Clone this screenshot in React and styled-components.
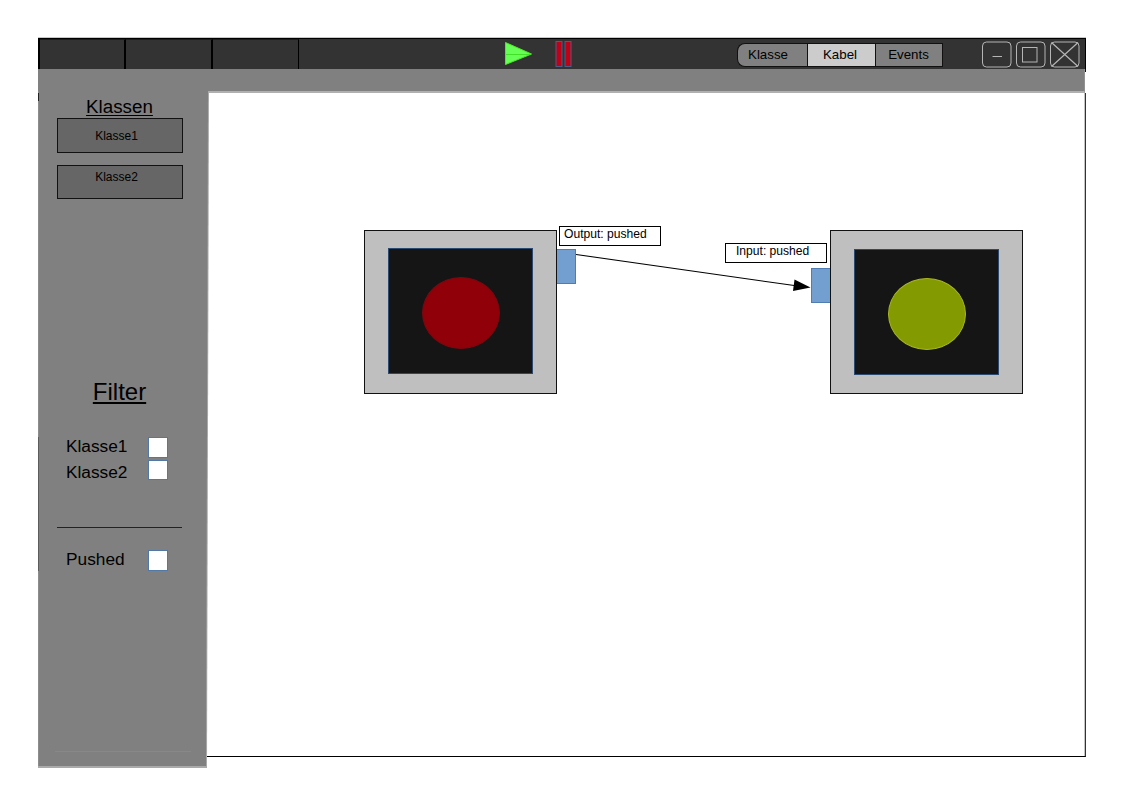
import React from "react";
import styled, { createGlobalStyle } from "styled-components";

const GlobalStyle = createGlobalStyle`
  * { box-sizing: border-box; }
  body {
    margin: 0;
    background: #fff;
    color: #000;
    font-family: "Liberation Sans", Arial, sans-serif;
  }
`;

const Page = styled.div`
  width: 1123px;
  height: 794px;
  padding: 38px 36px 0 38px;
  overflow: hidden;
`;

const Window = styled.main`
  width: 1048px;
`;

const TitleBar = styled.header`
  position: relative;
  z-index: 1;
  display: flex;
  align-items: flex-start;
  height: 31px;
  background: #333;
  border-top: 1px solid #000;
  border-right: 1px solid #000;
  box-shadow: 0 -1px 0 #c8c8c8;
`;

const Tabs = styled.nav`
  display: flex;
  width: 261px;
  height: 30px;
  border-left: 2px solid #000;
`;

const Tab = styled.div`
  width: ${(p) => p.$width}px;
  border-top: 1px solid #1c1c1c;
  border-right: ${(p) => p.$edge}px solid #000;
`;

const Playback = styled.div`
  display: flex;
  align-items: flex-start;
  gap: 22px;
  margin: 1px 0 0 205px;
`;

const ModeSwitch = styled.div`
  display: flex;
  margin: 4px 0 0 164px;
  height: 24px;
`;

const Mode = styled.button`
  width: ${(p) => p.$width}px;
  height: 24px;
  padding: 0 ${(p) => p.$shift || 0}px 1px 0;
  border: 1px solid #111;
  border-right-width: ${(p) => (p.$last ? 1 : 0)}px;
  border-radius: ${(p) => (p.$first ? "8px 0 0 8px" : "0")};
  background: ${(p) => (p.$active ? "#ccc" : "#808080")};
  color: #000;
  font: 13.3px "Liberation Sans", Arial, sans-serif;
  text-align: center;
`;

const WindowButtons = styled.div`
  display: flex;
  gap: 4px;
  margin: 2px 0 0 39px;
`;

const ToolStrip = styled.div`
  width: 1047px;
  height: 24px;
  background: #808080;
  border-bottom: 2px solid #b0b0b0;
  border-right: 1px solid #929292;
  box-shadow: 1px -21px 0 #111;
`;

const Body = styled.div`
  display: flex;
  align-items: flex-start;
`;

const SidebarEdge = styled.aside`
  position: relative;
  z-index: 1;
  flex: none;
  width: 171px;
  height: 677px;
  margin-top: -2px;
  background: #aaa;
  clip-path: polygon(0 0, 171px 0, 169px 100%, 0 100%);
`;

const SidebarPanel = styled.div`
  display: flex;
  flex-direction: column;
  height: 675px;
  padding: 5px 0 0 20px;
  background:
    linear-gradient(
      #8c8c8c 0 2px,
      #222 2px 10px,
      #8c8c8c 10px 346px,
      #5c5c5c 346px 480px,
      #8c8c8c 480px
    ) 0 0 / 1px 100% no-repeat,
    #808080;
  clip-path: polygon(0 0, 170px 0, 168px 100%, 0 100%);
`;

const Heading = styled.h2`
  width: 125px;
  margin: 0 0 0 -1px;
  font-size: ${(p) => p.$size}px;
  font-weight: 400;
  line-height: 22px;
  text-align: center;
  text-decoration: underline;
  text-decoration-thickness: ${(p) => p.$line}px;
  text-underline-offset: 2px;
  text-decoration-skip-ink: none;
`;

const ClassButton = styled.button`
  width: 126px;
  height: ${(p) => p.$height}px;
  margin: 0 0 ${(p) => p.$after}px -1px;
  padding: 0 7px ${(p) => p.$raise}px 0;
  border: 1px solid #111;
  background: #666;
  color: #000;
  font: 12px "Liberation Sans", Arial, sans-serif;
`;

const FilterList = styled.div`
  margin-top: 34px;
`;

const FilterRow = styled.label`
  display: flex;
  align-items: flex-start;
  height: ${(p) => p.$height}px;
  padding-left: 8px;
  font-size: 17.3px;
  line-height: 20px;
`;

const FilterName = styled.span`
  width: 82px;
  margin-top: ${(p) => p.$drop}px;
`;

const CheckBox = styled.span`
  width: 20px;
  height: ${(p) => p.$height || 20}px;
  background: #fff;
  border: 1px solid #5279a6;
`;

const Divider = styled.hr`
  width: 125px;
  height: 1px;
  margin: 46px 0 22px -1px;
  border: 0;
  background: #222;
`;

const FaintRule = styled.hr`
  width: 136px;
  height: 1px;
  margin: 180px 0 0 -3px;
  border: 0;
  background: #888;
`;

const Canvas = styled.section`
  position: relative;
  width: 880px;
  height: 664px;
  margin-left: -3px;
  border-right: 1px solid #333;
  border-bottom: 1px solid #000;
  box-shadow: inset -1px 0 0 #c4c4c4;
  background: #fff;
`;

const Node = styled.div`
  position: absolute;
  left: ${(p) => p.$x}px;
  top: 137px;
  width: 193px;
  height: 164px;
  padding: ${(p) => p.$inset}px 0 0 23px;
  border: 1px solid #111;
  background: #bfbfbf;
`;

const Screen = styled.div`
  width: 145px;
  height: 126px;
  padding: 28px 0 0 33px;
  border: 1px solid #2c4a70;
  background: #151515;
`;

const Lamp = styled.div`
  width: 78px;
  height: 72px;
  border: 1px solid ${(p) => p.$edge};
  border-radius: 50%;
  background: ${(p) => p.$color};
`;

const Port = styled.div`
  position: absolute;
  left: ${(p) => p.$x}px;
  top: ${(p) => p.$y}px;
  width: 20px;
  height: 35px;
  border: 1px solid #4f7db3;
  background: #729fcf;
`;

const PortLabel = styled.div`
  position: absolute;
  left: ${(p) => p.$x}px;
  top: ${(p) => p.$y}px;
  width: 102px;
  height: 20px;
  padding-left: ${(p) => p.$pad}px;
  border: 1px solid #000;
  background: #fff;
  font-size: 12.1px;
  line-height: 15px;
  white-space: nowrap;
`;

const Cable = styled.svg`
  position: absolute;
  left: 370px;
  top: 155px;
`;

const ControlIcon = ({ children }) => (
  <svg width="30" height="28" viewBox="0 0 30 28" fill="none" stroke="#b5b5b5">
    <rect x="0.5" y="1" width="28.5" height="25" rx="4" />
    {children}
  </svg>
);

export default function App() {
  return (
    <Page>
      <GlobalStyle />
      <Window>
        <TitleBar>
          <Tabs>
            <Tab $width={86} $edge={2} />
            <Tab $width={87} $edge={2} />
            <Tab $width={86} $edge={1} />
          </Tabs>
          <Playback>
            <svg width="29" height="28" viewBox="0 0 29 28">
              <path d="M1.5 2.5V24.5L27.5 14Z" fill="#66ff55" stroke="#4bea20" />
              <path d="M2 14.5H26" stroke="#43e02a" />
            </svg>
            <svg width="18" height="28" viewBox="0 0 18 28" fill="#c00014" stroke="#4d5d86">
              <rect x="1" y="1.5" width="6" height="25" />
              <rect x="10" y="1.5" width="6" height="25" />
            </svg>
          </Playback>
          <ModeSwitch>
            <Mode $width={70} $shift={9} $first>Klasse</Mode>
            <Mode $width={68} $shift={3} $active>Kabel</Mode>
            <Mode $width={68} $shift={1} $last>Events</Mode>
          </ModeSwitch>
          <WindowButtons>
            <ControlIcon><path d="M10.5 15.5H20" /></ControlIcon>
            <ControlIcon><rect x="6.5" y="6.5" width="14.5" height="14.5" /></ControlIcon>
            <ControlIcon><path d="M1.5 1.5L28 25.5M28 1.5L1.5 25.5" strokeWidth="1.2" /></ControlIcon>
          </WindowButtons>
        </TitleBar>
        <ToolStrip />
        <Body>
          <SidebarEdge>
            <SidebarPanel>
              <Heading $size={18.8} $line={1}>Klassen</Heading>
              <ClassButton $height={35} $after={12} $raise={0}>Klasse1</ClassButton>
              <ClassButton $height={34} $after={182} $raise={10}>Klasse2</ClassButton>
              <Heading $size={24} $line={2}>Filter</Heading>
              <FilterList>
                <FilterRow $height={23}>
                  <FilterName $drop={-1}>Klasse1</FilterName>
                  <CheckBox $height={21} />
                </FilterRow>
                <FilterRow $height={21}>
                  <FilterName $drop={2}>Klasse2</FilterName>
                  <CheckBox />
                </FilterRow>
              </FilterList>
              <Divider />
              <FilterRow $height={21}>
                <FilterName $drop={-1}>Pushed</FilterName>
                <CheckBox $height={21} />
              </FilterRow>
              <FaintRule />
            </SidebarPanel>
          </SidebarEdge>
          <Canvas>
            <Port $x={350} $y={156} />
            <Port $x={605} $y={175} />
            <Node $x={158} $inset={17}>
              <Screen><Lamp $color="#900008" $edge="#7c0810" /></Screen>
            </Node>
            <Node $x={624} $inset={18}>
              <Screen><Lamp $color="#839b00" $edge="#a9b624" /></Screen>
            </Node>
            <PortLabel $x={353} $y={133} $pad={4}>Output: pushed</PortLabel>
            <PortLabel $x={519} $y={150} $pad={10}>Input: pushed</PortLabel>
            <Cable width="236" height="50" viewBox="0 0 236 50">
              <path d="M0 6.5L220 37.8" stroke="#000" strokeWidth="1.1" />
              <path d="M218.5 31.5L234.5 39.5L217 43Z" fill="#000" />
            </Cable>
          </Canvas>
        </Body>
      </Window>
    </Page>
  );
}
